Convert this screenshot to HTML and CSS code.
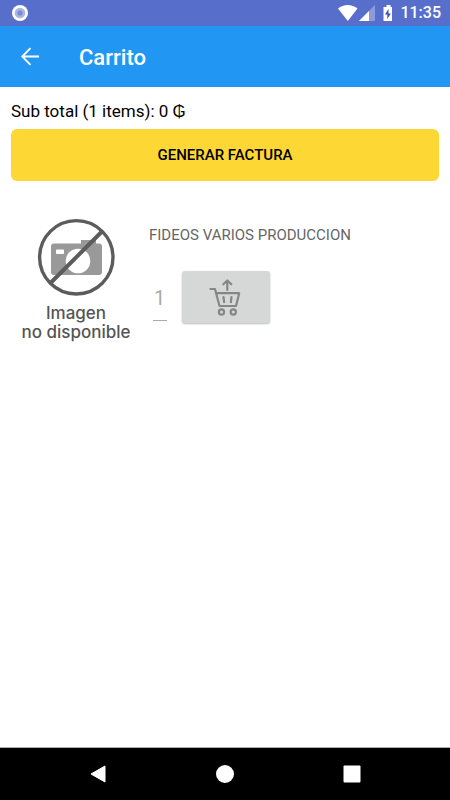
FILE: index.html
```html
<!DOCTYPE html>
<html lang="es">
<head>
<meta charset="utf-8">
<meta name="viewport" content="width=device-width, initial-scale=1">
<title>Carrito</title>
<link rel="stylesheet" href="styles.css">
</head>
<body>
<div class="status">
  <svg class="status-dot" width="18" height="18" viewBox="0 0 18 18" aria-hidden="true">
    <circle cx="9" cy="9" r="8" fill="#fff"/><circle cx="9" cy="9" r="5.3" fill="#aab5e3"/><circle cx="9" cy="9" r="2.6" fill="#7b89d2"/>
  </svg>
  <svg width="54" height="18" viewBox="0 0 54 18" aria-hidden="true">
    <path d="M0 4.600C5.500-.2 14-.2 19.500 4.600L9.800 17z" fill="#fff"/>
    <path d="M37 1v16H21z" fill="#8d9bdc"/><path d="M31 7v10H21z" fill="#fff"/>
    <path d="M45 3h3V1h4v2h2v14h-9z" transform="translate(.5 0)" fill="#fff"/><path d="M50.500 5l-3.500 5.500h2.300V15l3.500-5.500h-2.300z" fill="#3d51b5"/>
  </svg>
  <span class="clock">11:35</span>
</div>
<header class="appbar">
  <button class="back" type="button" aria-label="Volver">
    <svg width="20" height="20" viewBox="0 0 20 20" fill="none" stroke="#fff" stroke-width="1.800"><path d="M19 9.500H2.500M10.500 1.200L2.200 9.500l8.300 8.300"/></svg>
  </button>
  <h1>Carrito</h1>
</header>
<main>
  <p class="subtotal">Sub total (1 items): 0 ₲</p>
  <button class="invoice" type="button">GENERAR FACTURA</button>
  <article class="item">
    <figure>
      <svg width="78" height="78" viewBox="0 0 78 78" aria-hidden="true">
        <path fill="#999" d="M17 25.500H44V22H59v3.500h3a3 3 0 0 1 3 3V54a3 3 0 0 1-3 3H17a3 3 0 0 1-3-3V28.500a3 3 0 0 1 3-3z"/>
        <rect x="19" y="31.500" width="8" height="4.500" rx=".8" fill="#fff"/>
        <circle cx="41" cy="43" r="12.300" fill="#fff"/>
        <g fill="none" stroke="#5c5c5c"><path d="M13.500 65L65 13.500" stroke-width="4"/><circle cx="39.300" cy="39.300" r="36.700" stroke-width="3.400"/></g>
      </svg>
      <figcaption>Imagen<br>no disponible</figcaption>
    </figure>
    <div class="details">
      <h2>FIDEOS VARIOS PRODUCCION</h2>
      <div class="actions">
        <input class="quantity" type="text" value="1" aria-label="Cantidad">
        <button class="remove" type="button" aria-label="Quitar del carrito">
          <svg width="34" height="38" viewBox="0 0 34 38" fill="none" stroke="#858686" stroke-width="2.200" stroke-linecap="round" stroke-linejoin="round">
            <path d="M18.300 12V3M14.300 6.300L18.300 2.500l4 3.800M1.500 11H6L10.500 28H27l3.200-12.800H7.200M14.500 19l.6 5.200M22.500 19l-.6 5.200"/>
            <circle cx="12.500" cy="34" r="2.600"/><circle cx="24.300" cy="34" r="2.600"/>
          </svg>
        </button>
      </div>
    </div>
  </article>
</main>
<nav class="system" aria-label="Sistema">
  <button type="button" aria-label="Atrás"><svg width="18" height="18" viewBox="0 0 18 18"><path d="M2 9L16 1v16z" fill="#fff" stroke="#fff" stroke-linejoin="round"/></svg></button>
  <button type="button" aria-label="Inicio"><svg width="18" height="18" viewBox="0 0 18 18"><circle cx="9" cy="9" r="9" fill="#fff"/></svg></button>
  <button type="button" aria-label="Recientes"><svg width="18" height="18" viewBox="0 0 18 18"><rect x=".5" y=".5" width="17" height="17" rx="1" fill="#fff"/></svg></button>
</nav>
</body>
</html>
```
FILE: styles.css
```css
* { box-sizing: border-box; }

body {
  margin: 0;
  min-height: 100vh;
  display: flex;
  flex-direction: column;
  background: #fff;
  color: #000;
  font-family: Roboto, "Liberation Sans", sans-serif;
}

h1, h2, p, figure { margin: 0; }

button {
  padding: 0;
  border: 0;
  background: none;
  font: inherit;
  color: inherit;
}

svg { display: block; }

.status {
  display: flex;
  align-items: center;
  gap: 8px;
  height: 26px;
  padding: 0 9px 0 11px;
  background: #586ecb;
  color: #fff;
}

.status-dot { margin-right: auto; }

.clock {
  font-size: 16px;
  font-weight: 500;
  line-height: 28px;
}

.appbar {
  display: flex;
  align-items: center;
  gap: 39px;
  height: 61px;
  padding: 0 20px;
  background: #2196f3;
  color: #fff;
}

.appbar h1 {
  font-size: 22px;
  font-weight: 500;
  line-height: 28px;
  padding-top: 2px;
}

main {
  flex: 1;
  padding: 12px 11px;
}

.subtotal {
  font-size: 17px;
  line-height: 24px;
}

.invoice {
  display: block;
  width: 100%;
  height: 52px;
  margin-top: 6px;
  border-radius: 6px;
  background: #fdd835;
  font-size: 15px;
  font-weight: 500;
}

.item {
  display: flex;
  gap: 8px;
  margin-top: 37px;
}

figure {
  display: flex;
  flex-direction: column;
  align-items: center;
  width: 130px;
  flex: none;
}

figcaption {
  margin-top: 8px;
  color: #555;
  font-family: Inter, "Open Sans", sans-serif;
  font-size: 17px;
  font-weight: 500;
  line-height: 19px;
  text-align: center;
  white-space: nowrap;
}

.details h2 {
  margin-top: 7px;
  color: #666;
  font-size: 15px;
  font-weight: 400;
  line-height: 20px;
}

.actions {
  display: flex;
  align-items: center;
  gap: 15px;
  margin-top: 26px;
  padding-left: 4px;
}

.quantity {
  width: 14px;
  height: 37px;
  margin-top: 10px;
  padding: 0 0 8px 1px;
  border: 0;
  border-bottom: 1px solid #aaa;
  border-radius: 0;
  background: none;
  color: #aaa;
  font: 20px/28px Roboto, "Liberation Sans", sans-serif;
}

.remove {
  display: grid;
  place-items: center;
  width: 88px;
  height: 52px;
  border-radius: 3px;
  background: #d6d7d7;
  box-shadow: 0 1px 2px #0004;
}

.system {
  display: flex;
  justify-content: space-around;
  align-items: center;
  height: 53px;
  padding: 0 35px;
  border-top: 1px solid #aaa;
  background: #000;
}
```
